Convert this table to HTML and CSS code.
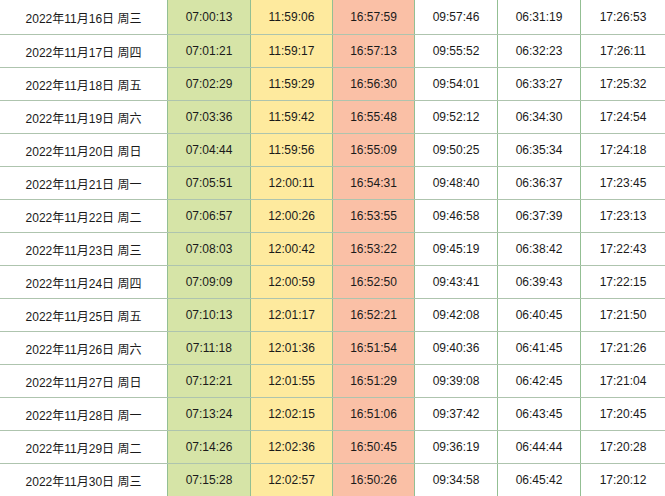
FILE: index.html
```html
<!DOCTYPE html>
<html lang="zh">
<head>
<meta charset="utf-8">
<link rel="stylesheet" href="styles.css">
</head>
<body>
<div class="table">
  <div class="row first"><div class="c date">2022年11月16日 周三</div><div class="c g">07:00:13</div><div class="c y">11:59:06</div><div class="c r">16:57:59</div><div class="c w">09:57:46</div><div class="c w">06:31:19</div><div class="c last">17:26:53</div></div>
  <div class="row"><div class="c date">2022年11月17日 周四</div><div class="c g">07:01:21</div><div class="c y">11:59:17</div><div class="c r">16:57:13</div><div class="c w">09:55:52</div><div class="c w">06:32:23</div><div class="c last">17:26:11</div></div>
  <div class="row"><div class="c date">2022年11月18日 周五</div><div class="c g">07:02:29</div><div class="c y">11:59:29</div><div class="c r">16:56:30</div><div class="c w">09:54:01</div><div class="c w">06:33:27</div><div class="c last">17:25:32</div></div>
  <div class="row"><div class="c date">2022年11月19日 周六</div><div class="c g">07:03:36</div><div class="c y">11:59:42</div><div class="c r">16:55:48</div><div class="c w">09:52:12</div><div class="c w">06:34:30</div><div class="c last">17:24:54</div></div>
  <div class="row"><div class="c date">2022年11月20日 周日</div><div class="c g">07:04:44</div><div class="c y">11:59:56</div><div class="c r">16:55:09</div><div class="c w">09:50:25</div><div class="c w">06:35:34</div><div class="c last">17:24:18</div></div>
  <div class="row"><div class="c date">2022年11月21日 周一</div><div class="c g">07:05:51</div><div class="c y">12:00:11</div><div class="c r">16:54:31</div><div class="c w">09:48:40</div><div class="c w">06:36:37</div><div class="c last">17:23:45</div></div>
  <div class="row"><div class="c date">2022年11月22日 周二</div><div class="c g">07:06:57</div><div class="c y">12:00:26</div><div class="c r">16:53:55</div><div class="c w">09:46:58</div><div class="c w">06:37:39</div><div class="c last">17:23:13</div></div>
  <div class="row"><div class="c date">2022年11月23日 周三</div><div class="c g">07:08:03</div><div class="c y">12:00:42</div><div class="c r">16:53:22</div><div class="c w">09:45:19</div><div class="c w">06:38:42</div><div class="c last">17:22:43</div></div>
  <div class="row"><div class="c date">2022年11月24日 周四</div><div class="c g">07:09:09</div><div class="c y">12:00:59</div><div class="c r">16:52:50</div><div class="c w">09:43:41</div><div class="c w">06:39:43</div><div class="c last">17:22:15</div></div>
  <div class="row"><div class="c date">2022年11月25日 周五</div><div class="c g">07:10:13</div><div class="c y">12:01:17</div><div class="c r">16:52:21</div><div class="c w">09:42:08</div><div class="c w">06:40:45</div><div class="c last">17:21:50</div></div>
  <div class="row"><div class="c date">2022年11月26日 周六</div><div class="c g">07:11:18</div><div class="c y">12:01:36</div><div class="c r">16:51:54</div><div class="c w">09:40:36</div><div class="c w">06:41:45</div><div class="c last">17:21:26</div></div>
  <div class="row"><div class="c date">2022年11月27日 周日</div><div class="c g">07:12:21</div><div class="c y">12:01:55</div><div class="c r">16:51:29</div><div class="c w">09:39:08</div><div class="c w">06:42:45</div><div class="c last">17:21:04</div></div>
  <div class="row"><div class="c date">2022年11月28日 周一</div><div class="c g">07:13:24</div><div class="c y">12:02:15</div><div class="c r">16:51:06</div><div class="c w">09:37:42</div><div class="c w">06:43:45</div><div class="c last">17:20:45</div></div>
  <div class="row"><div class="c date">2022年11月29日 周二</div><div class="c g">07:14:26</div><div class="c y">12:02:36</div><div class="c r">16:50:45</div><div class="c w">09:36:19</div><div class="c w">06:44:44</div><div class="c last">17:20:28</div></div>
  <div class="row"><div class="c date">2022年11月30日 周三</div><div class="c g">07:15:28</div><div class="c y">12:02:57</div><div class="c r">16:50:26</div><div class="c w">09:34:58</div><div class="c w">06:45:42</div><div class="c last">17:20:12</div></div>
</div>
</body>
</html>
```
FILE: styles.css
```css
html, body {
  margin: 0;
  padding: 0;
  background: #ffffff;
}
body {
  width: 665px;
  height: 496px;
  overflow: hidden;
  font-family: "Liberation Sans", "Noto Sans CJK SC", sans-serif;
  font-size: 12px;
  color: #1a1a1a;
}
.table {
  display: flex;
  flex-direction: column;
  width: 665px;
}
.row {
  display: flex;
  height: 33px;
  box-sizing: border-box;
  border-bottom: 1px solid #aec4ae;
}
.row.first {
  height: 35px;
}
.c {
  display: flex;
  align-items: center;
  justify-content: center;
  box-sizing: border-box;
  border-right: 1px solid #93bf93;
  white-space: nowrap;
  flex: none;
  width: 83px;
}
.date { width: 168px; }
.g { background: #d6e4a7; width: 83px; }
.y { background: #feea9e; width: 82px; }
.r { background: #fac0a6; width: 82px; }
.w { background: #ffffff; width: 83px; }
.last { width: 84px; flex: 1 0 auto; border-right: none; }
```
